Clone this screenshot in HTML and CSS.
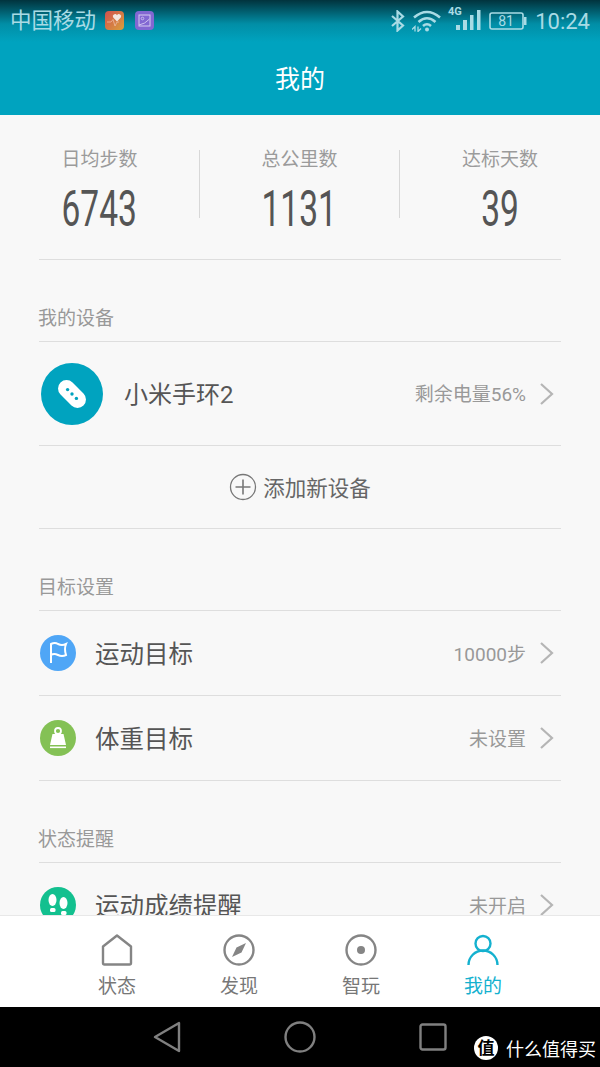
FILE: index.html
```html
<!DOCTYPE html>
<html>
<head>
<title>我的</title>
<link rel="stylesheet" href="styles.css">
</head>
<body>

<div class="top">
    <div class="status">
        <span class="carrier">中国移动</span>
        <svg class="app-icon" width="19" height="19" viewBox="0 0 19 19">
            <defs><linearGradient id="heart" x1="0" y1="0" x2="1" y2="1"><stop offset="0" stop-color="#d0504f"/><stop offset="1" stop-color="#d9a03c"/></linearGradient></defs>
            <rect width="19" height="19" rx="4" fill="url(#heart)"/>
            <path d="M12 10.5 L8.2 6.6 A2.2 2.2 0 0 1 12 4.2 A2.2 2.2 0 0 1 15.8 6.6 Z" fill="#f4e6e0"/>
            <path d="M2 11 H6 L8 8.5 L10 15 L12 11 H14" fill="none" stroke="#eeb9a0" stroke-width="0.8"/>
        </svg>
        <svg class="app-icon app-icon-second" width="19" height="19" viewBox="0 0 19 19">
            <rect width="19" height="19" rx="4" fill="#8267d2"/>
            <rect x="4" y="4" width="11" height="11" fill="none" stroke="#d5cbf2" stroke-width="1"/>
            <circle cx="7.5" cy="7.5" r="1.3" fill="none" stroke="#d5cbf2" stroke-width="0.8"/>
            <path d="M4 14 Q10 13 14.5 8" fill="none" stroke="#d5cbf2" stroke-width="0.9"/>
        </svg>
        <span class="spacer"></span>
        <svg class="sys-bt" width="16" height="22" viewBox="0 0 16 22">
            <path d="M2 6 L13 15.5 L7.5 20.5 V1.5 L13 6.5 L2 16" fill="none" stroke="#a9dbe5" stroke-width="2.2"/>
        </svg>
        <svg class="sys-wifi" width="30" height="22" viewBox="0 0 30 22">
            <path d="M2 7.5 Q15 -3.5 28 7.5" fill="none" stroke="#a9dbe5" stroke-width="2.6"/>
            <path d="M6.5 12 Q15 4.5 23.5 12" fill="none" stroke="#a9dbe5" stroke-width="2.6"/>
            <path d="M11 16 Q15 12.5 19 16" fill="none" stroke="#a9dbe5" stroke-width="2.6"/>
            <circle cx="15" cy="19.5" r="2" fill="#a9dbe5"/>
            <path d="M3 21.5 V16.5 L0 19.5 M6 16.5 V21.5 L9 18.5" fill="none" stroke="#a9dbe5" stroke-width="1.3"/>
        </svg>
        <svg class="sys-signal" width="34" height="28" viewBox="0 -4 34 28">
            <text x="1" y="8" class="sig-text">4G</text>
            <rect x="9" y="18" width="4" height="5" fill="#a9dbe5"/>
            <rect x="16" y="13" width="4" height="10" fill="#a9dbe5"/>
            <rect x="23" y="8" width="3.5" height="15" fill="#a9dbe5"/>
            <rect x="30" y="3" width="3.5" height="20" fill="#a9dbe5"/>
        </svg>
        <svg class="sys-battery" width="38" height="18" viewBox="0 0 38 18">
            <rect x="1" y="1" width="33" height="16" rx="2" fill="none" stroke="#a9dbe5" stroke-width="1.6"/>
            <rect x="35" y="5" width="2.5" height="8" fill="#a9dbe5"/>
            <text x="17" y="14" text-anchor="middle" class="bat-text">81</text>
        </svg>
        <span class="clock">10:24</span>
    </div>
    <div class="title">我的</div>
</div>

<div class="main">
    <div class="stats">
        <div class="stat">
            <div class="stat-label">日均步数</div>
            <div class="stat-num"><span>6743</span></div>
        </div>
        <div class="stat">
            <div class="stat-label">总公里数</div>
            <div class="stat-num"><span>1131</span></div>
        </div>
        <div class="stat">
            <div class="stat-label">达标天数</div>
            <div class="stat-num"><span>39</span></div>
        </div>
    </div>

    <div class="section">我的设备</div>
    <div class="row device">
        <svg class="device-icon" width="62" height="62" viewBox="0 0 62 62">
            <circle cx="31" cy="31" r="31" fill="#00a3bf"/>
            <rect x="14.75" y="22.5" width="32.5" height="17" rx="8.5" fill="#fff" transform="rotate(45 31 31)"/>
            <circle cx="26.6" cy="26.6" r="1.7" fill="#00a3bf"/>
            <circle cx="31" cy="31" r="1.7" fill="#00a3bf"/>
            <circle cx="35.4" cy="35.4" r="1.7" fill="#00a3bf"/>
        </svg>
        <span class="device-name">小米手环2</span>
        <span class="value">剩余电量56%</span>
        <svg class="chevron" width="16" height="24" viewBox="0 0 16 24"><path d="M2 2 L13 12 L2 22" fill="none" stroke="#b5b5b5" stroke-width="2.2"/></svg>
    </div>
    <div class="add-row">
        <svg width="28" height="28" viewBox="0 0 28 28">
            <circle cx="14" cy="14" r="12.5" fill="none" stroke="#777" stroke-width="1.3"/>
            <path d="M14 6.5 V21.5 M6.5 14 H21.5" stroke="#777" stroke-width="1.6"/>
        </svg>
        <span>添加新设备</span>
    </div>

    <div class="section">目标设置</div>
    <div class="row">
        <svg class="row-icon" width="36" height="36" viewBox="0 0 36 36">
            <circle cx="18" cy="18" r="18" fill="#4fa6f6"/>
            <path d="M11 28 V9 Q15 7 18 9 Q22 11 26 9 Q24 14 26 20 Q22 22 18 20 Q14 18 11 20" fill="none" stroke="#fff" stroke-width="2"/>
        </svg>
        <span class="row-name">运动目标</span>
        <span class="value">10000步</span>
        <svg class="chevron" width="16" height="24" viewBox="0 0 16 24"><path d="M2 2 L13 12 L2 22" fill="none" stroke="#b5b5b5" stroke-width="2.2"/></svg>
    </div>
    <div class="row">
        <svg class="row-icon" width="36" height="36" viewBox="0 0 36 36">
            <circle cx="18" cy="18" r="18" fill="#84c155"/>
            <circle cx="18" cy="11" r="3" fill="none" stroke="#fff" stroke-width="1.8"/>
            <path d="M12.5 14 H23.5 L26 25 H10 Z" fill="#fff"/>
            <rect x="10" y="26.5" width="16" height="1.6" fill="#fff"/>
        </svg>
        <span class="row-name">体重目标</span>
        <span class="value">未设置</span>
        <svg class="chevron" width="16" height="24" viewBox="0 0 16 24"><path d="M2 2 L13 12 L2 22" fill="none" stroke="#b5b5b5" stroke-width="2.2"/></svg>
    </div>

    <div class="section">状态提醒</div>
    <div class="row">
        <svg class="row-icon" width="36" height="36" viewBox="0 0 36 36">
            <circle cx="18" cy="18" r="18" fill="#13c08f"/>
            <ellipse cx="12.5" cy="13" rx="4" ry="6" fill="#fff"/>
            <rect x="10" y="21" width="5.5" height="4" rx="1.5" fill="#fff"/>
            <ellipse cx="23.5" cy="16" rx="4" ry="6" fill="#fff"/>
            <rect x="21" y="24" width="5.5" height="4" rx="1.5" fill="#fff"/>
        </svg>
        <span class="row-name">运动成绩提醒</span>
        <span class="value">未开启</span>
        <svg class="chevron" width="16" height="24" viewBox="0 0 16 24"><path d="M2 2 L13 12 L2 22" fill="none" stroke="#b5b5b5" stroke-width="2.2"/></svg>
    </div>
</div>

<div class="tabs">
    <div class="tab">
        <svg width="32" height="32" viewBox="0 0 32 32">
            <path d="M16 1.5 L30 12.5 V29 A1.5 1.5 0 0 1 28.5 30.5 H3.5 A1.5 1.5 0 0 1 2 29 V12.5 Z" fill="none" stroke="#858585" stroke-width="2.4" stroke-linejoin="round"/>
        </svg>
        <span>状态</span>
    </div>
    <div class="tab">
        <svg width="32" height="32" viewBox="0 0 32 32">
            <circle cx="16" cy="16" r="14.5" fill="none" stroke="#858585" stroke-width="2.4"/>
            <path d="M23 9 L18.5 18.5 L9 23 L13.5 13.5 Z" fill="#858585"/>
        </svg>
        <span>发现</span>
    </div>
    <div class="tab">
        <svg width="32" height="32" viewBox="0 0 32 32">
            <circle cx="16" cy="16" r="14.5" fill="none" stroke="#858585" stroke-width="2.4"/>
            <circle cx="16" cy="16" r="4" fill="#858585"/>
        </svg>
        <span>智玩</span>
    </div>
    <div class="tab active">
        <svg width="32" height="32" viewBox="0 0 32 32">
            <circle cx="16" cy="9.5" r="7.5" fill="none" stroke="#14b1cf" stroke-width="2.4"/>
            <path d="M1.5 31 A14.5 14.5 0 0 1 30.5 31" fill="none" stroke="#14b1cf" stroke-width="2.4"/>
        </svg>
        <span>我的</span>
    </div>
</div>

<div class="nav">
    <svg class="nav-back" width="28" height="32" viewBox="0 0 28 32">
        <path d="M2 16 L26 2 V30 Z" fill="none" stroke="#808080" stroke-width="2.4" stroke-linejoin="round"/>
    </svg>
    <svg class="nav-home" width="32" height="32" viewBox="0 0 32 32">
        <circle cx="16" cy="16" r="14.5" fill="none" stroke="#808080" stroke-width="2.4"/>
    </svg>
    <svg class="nav-recent" width="28" height="28" viewBox="0 0 28 28">
        <rect x="1.5" y="1.5" width="25" height="25" rx="2" fill="none" stroke="#808080" stroke-width="2.4"/>
    </svg>
    <div class="watermark">
        <span class="wm-badge">值</span>
        <span>什么值得买</span>
    </div>
</div>

</body>
</html>
```

FILE: styles.css
```css
* {
    box-sizing: border-box;
}

body {
    margin: 0;
    width: 600px;
    height: 1067px;
    display: flex;
    flex-direction: column;
    overflow: hidden;
    background: #f8f8f8;
    font-family: "Roboto", "Noto Sans CJK SC", sans-serif;
}

.top {
    height: 115px;
    background: linear-gradient(#01333d 0, #018ea6 24px, #00a3bf 42px);
    flex-shrink: 0;
}

.status {
    height: 42px;
    display: flex;
    align-items: center;
    padding: 0 10px 0 10px;
    color: #a9dbe5;
}

.carrier {
    font-size: 21.5px;
    line-height: 42px;
}

.app-icon {
    margin-left: 9px;
    margin-bottom: 2px;
}

.app-icon-second {
    margin-left: 11px;
}

.spacer {
    flex: 1;
}

.sys-bt {
    margin-bottom: 1px;
}

.sys-wifi {
    margin-left: 6px;
}

.sys-signal {
    margin-left: 5px;
    margin-bottom: 8px;
}

.sig-text {
    font-size: 11px;
    font-weight: 700;
    fill: #a9dbe5;
    font-family: "Roboto", sans-serif;
}

.sys-battery {
    margin-left: 8px;
}

.bat-text {
    font-size: 14px;
    fill: #a9dbe5;
    font-family: "Roboto", sans-serif;
}

.clock {
    font-size: 22px;
    margin-left: 8px;
}

.title {
    text-align: center;
    color: white;
    font-size: 25px;
    line-height: 34px;
    margin-top: 21px;
}

.main {
    flex: 1;
    overflow: hidden;
    min-height: 0;
}

.stats {
    height: 145px;
    display: grid;
    grid-template-columns: 200px 200px 200px;
    position: relative;
    padding-top: 35px;
}

.stats::after {
    content: "";
    position: absolute;
    left: 39px;
    right: 39px;
    bottom: 0;
    border-bottom: 1px solid #dedede;
}

.stat {
    height: 68px;
    text-align: center;
    border-right: 1px solid #d8d8d8;
}

.stat:last-child {
    border-right: none;
}

.stat-label {
    font-size: 19px;
    line-height: 26px;
    margin-top: -3px;
    color: #9b9b9b;
}

.stat-num {
    margin-top: 7px;
    font-size: 50px;
    line-height: 58px;
    color: #555;
}

.stat-num span {
    display: inline-block;
    transform: scaleX(0.67);
}

.section {
    height: 82px;
    margin: 0 39px;
    padding-top: 47px;
    border-bottom: 1px solid #dedede;
    font-size: 19px;
    line-height: 24px;
    text-indent: -1px;
    color: #999;
}

.row {
    height: 85px;
    margin: 0 39px;
    display: flex;
    align-items: center;
    border-bottom: 1px solid #dedede;
}

.row.device {
    height: 104px;
}

.device-icon {
    margin-left: 2px;
}

.device-name {
    margin-left: 21px;
    margin-bottom: 3px;
    flex: 1;
    font-size: 24px;
    color: #555;
}

.row-icon {
    margin-left: 1px;
}

.row-name {
    margin-left: 19px;
    margin-bottom: 2px;
    flex: 1;
    font-size: 24.5px;
    color: #555;
}

.value {
    font-size: 19px;
    margin-bottom: 2px;
    color: #999;
}

.chevron {
    margin-left: 13px;
    margin-right: 6px;
}

.add-row {
    height: 83px;
    margin: 0 39px;
    display: flex;
    align-items: center;
    justify-content: center;
    gap: 6px;
    border-bottom: 1px solid #dedede;
    font-size: 21.5px;
    color: #666;
}

.add-row span {
    margin-bottom: 2px;
}

.tabs {
    height: 92px;
    flex-shrink: 0;
    background: white;
    border-top: 1px solid #e8e8e8;
    display: flex;
    padding: 18px 56px 0;
}

.tab {
    width: 122px;
    display: flex;
    flex-direction: column;
    align-items: center;
    gap: 8px;
    font-size: 19px;
    line-height: 26px;
    color: #777;
}

.tab.active {
    color: #14b1cf;
}

.nav {
    height: 60px;
    flex-shrink: 0;
    background: black;
    display: flex;
    align-items: center;
    position: relative;
}

.nav-back {
    margin-left: 153px;
}

.nav-home {
    margin-left: 103px;
}

.nav-recent {
    margin-left: 103px;
}

.watermark {
    position: absolute;
    right: 4px;
    bottom: 6px;
    display: flex;
    align-items: center;
    gap: 8px;
    color: white;
    font-size: 18px;
}

.wm-badge {
    width: 24px;
    height: 24px;
    border-radius: 50%;
    background: white;
    color: black;
    font-size: 17px;
    line-height: 24px;
    text-align: center;
    font-weight: 700;
}
```
